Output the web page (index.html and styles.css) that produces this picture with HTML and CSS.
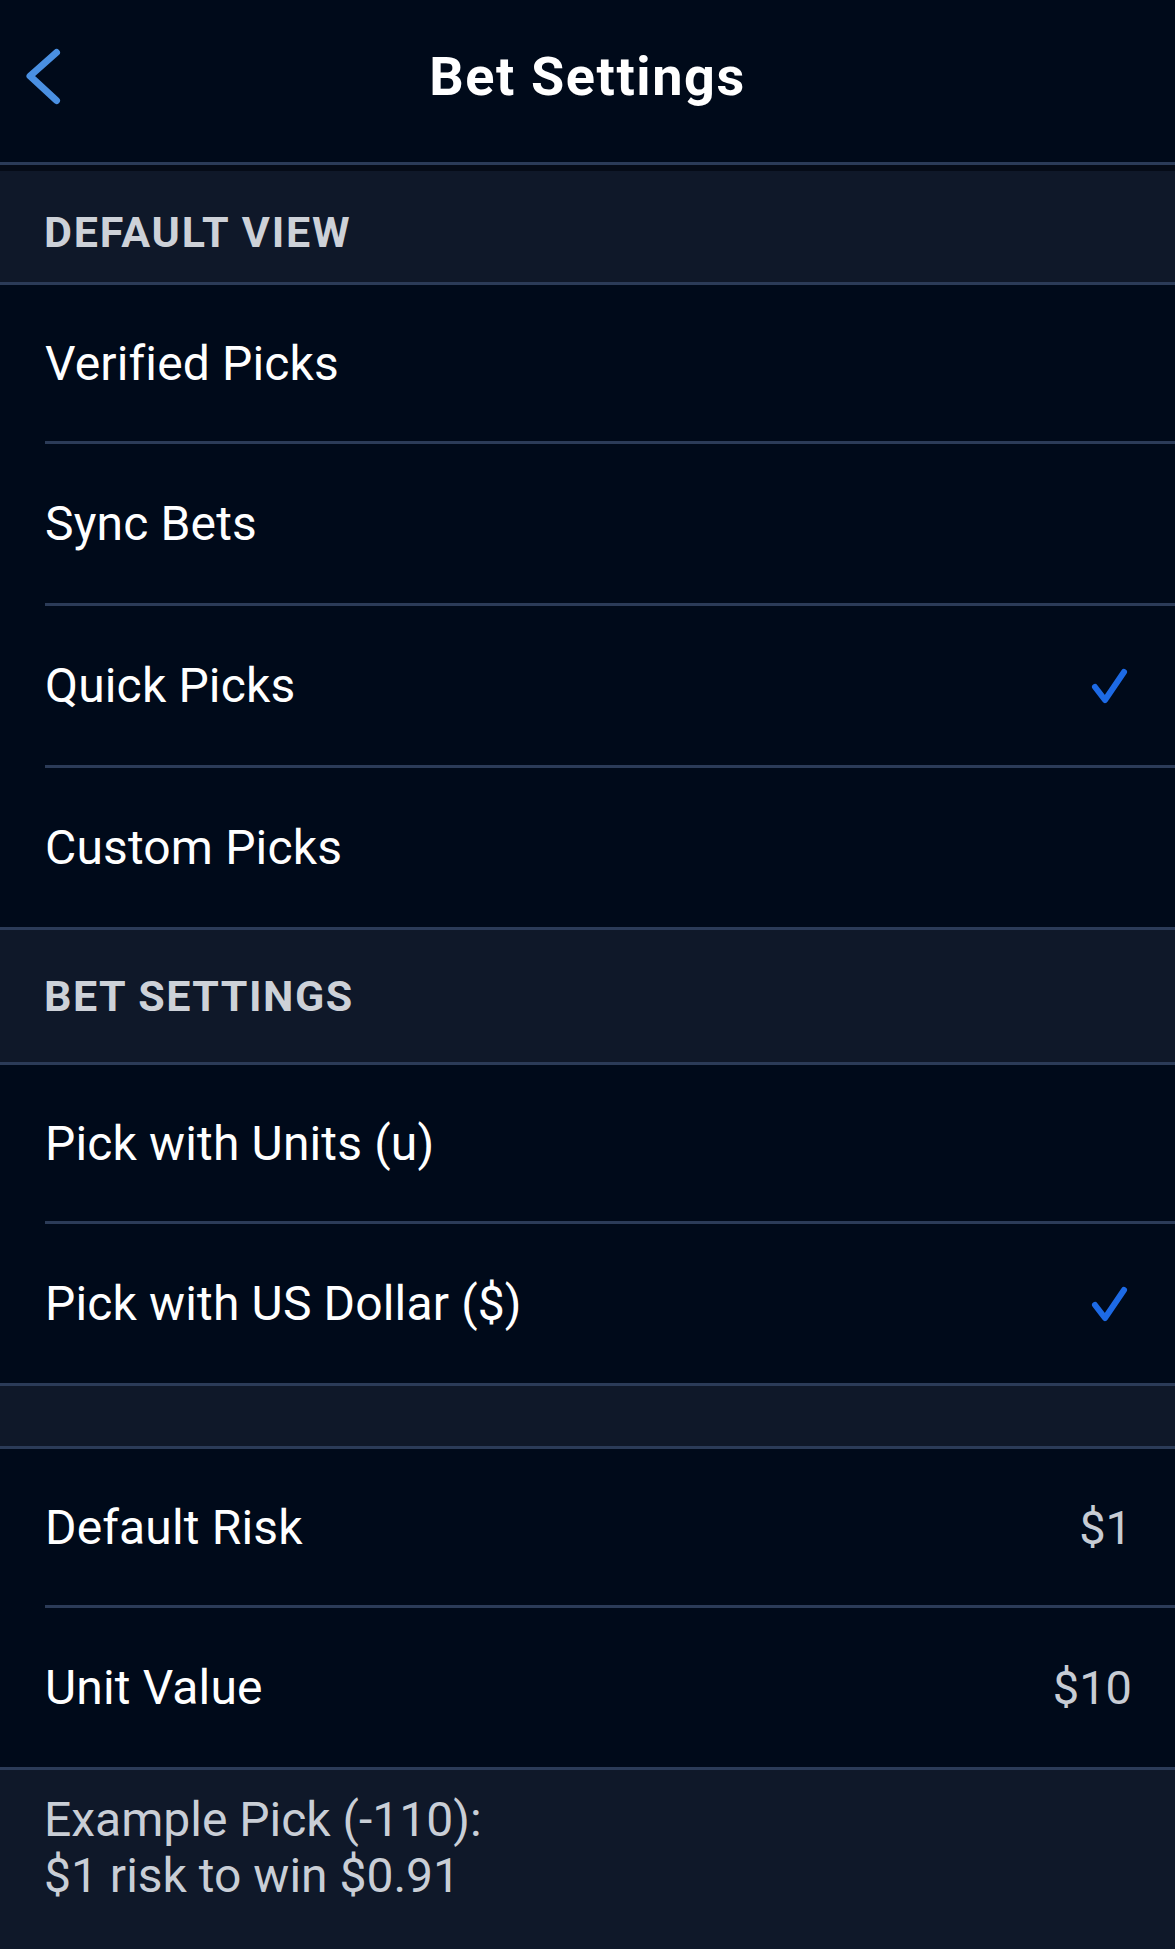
FILE: index.html
```html
<!DOCTYPE html>
<html lang="en">
<head>
<meta charset="utf-8">
<title>Bet Settings</title>
<link rel="stylesheet" href="styles.css">
</head>
<body>
<div class="screen">
  <header class="nav">
    <div class="nav-left">
      <svg class="back" width="45" height="65" viewBox="0 0 45 65" aria-label="Back">
        <path d="M36.5 8.5 L10 32 L36.5 56.5" fill="none" stroke="#4a90e2" stroke-width="7" stroke-linecap="round" stroke-linejoin="round"/>
      </svg>
    </div>
    <h1 class="nav-title">Bet Settings</h1>
    <div class="nav-right"></div>
  </header>

  <div class="section-head section-head--first">DEFAULT VIEW</div>
  <ul class="group">
    <li class="row"><span class="label">Verified Picks</span></li>
    <li class="row"><span class="label">Sync Bets</span></li>
    <li class="row"><span class="label">Quick Picks</span>
      <svg class="check" width="38" height="36" viewBox="0 0 38 36"><path d="M4 19 L14 32 L33 4" fill="none" stroke="#1d6ae5" stroke-width="6" stroke-linecap="round" stroke-linejoin="round"/></svg>
    </li>
    <li class="row"><span class="label">Custom Picks</span></li>
  </ul>

  <div class="section-head">BET SETTINGS</div>
  <ul class="group">
    <li class="row"><span class="label">Pick with Units (u)</span></li>
    <li class="row"><span class="label">Pick with US Dollar ($)</span>
      <svg class="check" width="38" height="36" viewBox="0 0 38 36"><path d="M4 19 L14 32 L33 4" fill="none" stroke="#1d6ae5" stroke-width="6" stroke-linecap="round" stroke-linejoin="round"/></svg>
    </li>
  </ul>

  <div class="section-head section-head--empty"></div>
  <ul class="group">
    <li class="row"><span class="label">Default Risk</span><span class="value">$1</span></li>
    <li class="row"><span class="label">Unit Value</span><span class="value">$10</span></li>
  </ul>

  <footer class="footer">
    <p>Example Pick (-110):<br>$1 risk to win $0.91</p>
  </footer>
</div>
</body>
</html>
```
FILE: styles.css
```css
* { box-sizing: border-box; }
html, body {
  margin: 0;
  padding: 0;
  background: #000a1a;
}
body {
  font-family: Roboto, "Liberation Sans", sans-serif;
  color: #ffffff;
}
.screen {
  width: 1175px;
  min-height: 1949px;
  background: #000a1a;
  display: flex;
  flex-direction: column;
}
.nav {
  height: 165px;
  border-bottom: 3px solid #2b3b58;
  display: grid;
  grid-template-columns: 1fr auto 1fr;
  align-items: center;
  padding: 0 0 10px 0;
}
.nav-left {
  padding-left: 20px;
  display: flex;
  align-items: center;
}
.back { display: block; }
.nav-title {
  margin: 0;
  font-size: 54px;
  font-weight: 700;
  letter-spacing: 1.6px;
  color: #ffffff;
}
.section-head {
  height: 135px;
  background: #0f1829;
  border-bottom: 3px solid #2b3b58;
  display: flex;
  align-items: center;
  padding-left: 44px;
  font-size: 43px;
  font-weight: 700;
  color: #cdd1d8;
  letter-spacing: 1.5px;
}
.section-head--first {
  height: 120px;
  border-top: 6px solid #050b17;
  padding-top: 10px;
  letter-spacing: 1.8px;
}
.section-head--empty {
  height: 63px;
}
.group {
  list-style: none;
  margin: 0;
  padding: 0;
  border-bottom: 3px solid #2b3b58;
}
.row {
  height: 162px;
  margin-left: 45px;
  padding-right: 46px;
  display: flex;
  align-items: center;
  justify-content: space-between;
  border-bottom: 3px solid #2b3b58;
}
.row:first-child { height: 159px; }
.row:last-child {
  border-bottom: none;
  height: 159px;
}
.label {
  font-size: 48px;
  font-weight: 400;
  letter-spacing: 0.15px;
  color: #ffffff;
}
.value {
  font-size: 47px;
  color: #c7ccd4;
  margin-right: -3px;
}
.check { display: block; }
.footer {
  flex: 1;
  background: #0f1829;
  padding: 22px 44px 0 44px;
}
.footer p {
  margin: 0;
  font-size: 48px;
  line-height: 56px;
  color: #c9ced6;
}
```
